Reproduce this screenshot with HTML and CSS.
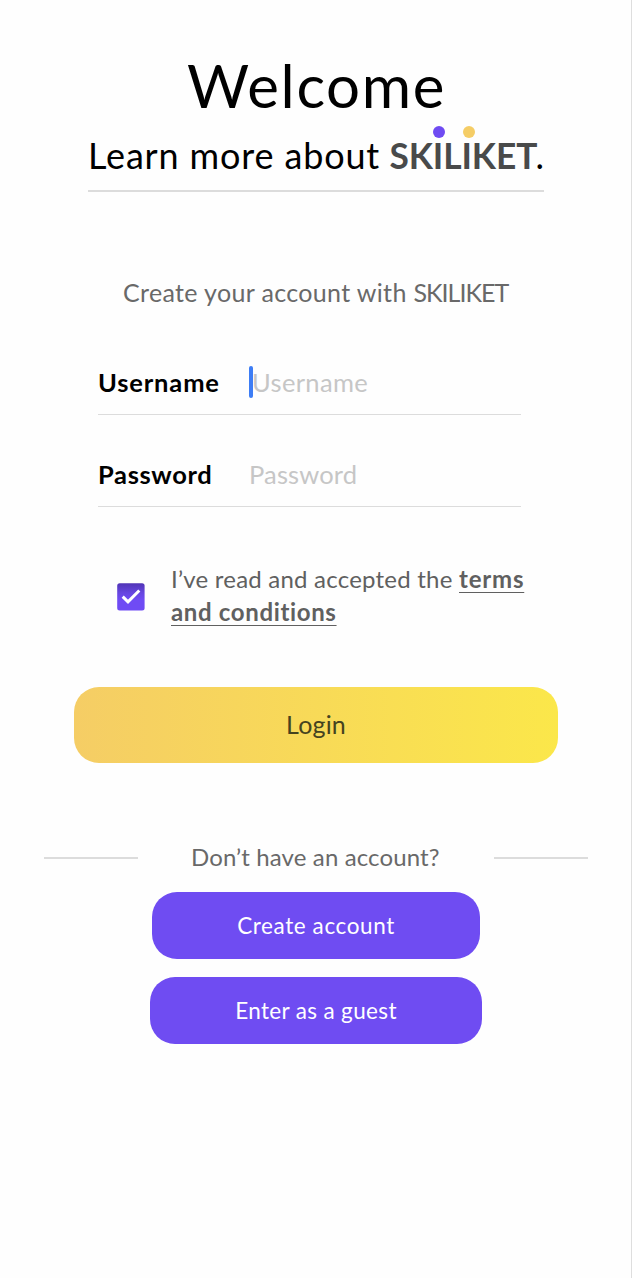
FILE: index.html
```html
<!DOCTYPE html>
<html lang="en">
<head>
<meta charset="utf-8">
<title>Skiliket login</title>
<link rel="stylesheet" href="styles.css">
</head>
<body>
<main class="screen">
  <header class="intro">
    <h1 class="title">Welcome</h1>
    <p class="tagline"><span class="lead">Learn more about</span><span class="brand">SK<span class="dotted violet">I</span>L<span class="dotted amber">I</span>KET</span><span class="stop">.</span></p>
  </header>
  <p class="prompt">Create your account with <span class="name">SKILIKET</span></p>
  <form class="form">
    <div class="field"><span class="label user">Username</span><span class="caret"></span><span class="hint hint-user">Username</span></div>
    <div class="field"><span class="label pass">Password</span><span class="hint hint-pass">Password</span></div>
  </form>
  <div class="consent">
    <svg class="check" viewBox="0 0 28 28">
      <defs><linearGradient id="shade" x1="0" y1="0" x2="0" y2="1"><stop offset="0" stop-color="#5034b5"/><stop offset=".35" stop-color="#6646e0"/><stop offset=".6" stop-color="#6f4bf4"/></linearGradient></defs>
      <rect x=".2" y=".2" width="27.4" height="27.4" rx="2.5" fill="url(#shade)"/>
      <path d="M5.7 13.6 11 18.8 22.3 7.5" fill="none" stroke="#fff" stroke-width="3"/>
    </svg>
    <p class="terms"><span class="read">I’ve read and accepted the</span><a class="link link-one">terms</a><br><a class="link link-two">and conditions</a></p>
  </div>
  <button class="login"><span>Login</span></button>
  <div class="divider"><span class="rule"></span><span class="question">Don’t have an account?</span><span class="rule"></span></div>
  <div class="actions">
    <button class="action create"><span>Create account</span></button>
    <button class="action guest"><span>Enter as a guest</span></button>
  </div>
</main>
</body>
</html>
```
FILE: styles.css
```css
* { box-sizing: border-box; }
body { margin: 0; background: #fefefe; font-family: Lato, "Open Sans", sans-serif; color: #000; }
h1, p { margin: 0; font-weight: 400; }
button { border: 0; padding: 0; font-family: inherit; }
.screen { width: 632px; height: 1278px; padding-top: 49px; border-right: 1px solid #dedede; display: flex; flex-direction: column; white-space: nowrap; }
.intro { width: 456px; height: 143px; margin-left: 88px; border-bottom: 2px solid #dcdcdc; }
.title { margin-left: 99px; font-size: 60px; line-height: 72px; letter-spacing: 1.6px; }
.tagline { display: flex; font-size: 36px; line-height: 69px; }
.lead { width: 303px; letter-spacing: .85px; }
.brand { width: 146px; font-weight: 700; font-size: 35.3px; color: #494a4a; letter-spacing: -.1px; }
.dotted { position: relative; }
.dotted::before { content: ""; position: absolute; left: 50%; top: -8px; width: 12px; height: 12px; margin-left: -5.5px; border-radius: 50%; }
.violet::before { background: #6f4bf2; }
.amber::before { background: #f5cd66; margin-left: -4px; }
.prompt { margin: 80px 0 0 123px; font-size: 25px; line-height: 40px; color: #696969; letter-spacing: .35px; }
.name { letter-spacing: -1px; }
.form { width: 423px; margin: 39px 0 0 98px; }
.field { display: flex; align-items: center; height: 64px; border-bottom: 1px solid #dcdcdc; font-size: 25.5px; line-height: 40px; padding-bottom: 1px; }
.field + .field { margin-top: 28px; }
.label { width: 151px; font-weight: 700; letter-spacing: .85px; }
.pass { letter-spacing: .65px; }
.caret { width: 4px; height: 32px; border-radius: 2px; background: #3d7df5; }
.hint { color: #c6c6c6; letter-spacing: .15px; }
.hint-user { margin-left: -1px; letter-spacing: .35px; }
.consent { display: flex; margin: 55px 0 0 117px; }
.check { width: 28px; height: 28px; margin-top: 21px; }
.terms { margin-left: 26px; color: #606060; font-size: 24px; line-height: 33px; }
.read { display: inline-block; width: 288px; letter-spacing: .22px; }
.link { font-weight: 700; text-decoration: underline; text-decoration-thickness: 1px; text-underline-offset: 4px; font-variant-ligatures: none; }
.link-one { letter-spacing: .8px; }
.link-two { letter-spacing: .65px; }
.login { width: 484px; height: 76px; margin: 59px 0 0 74px; padding-bottom: 2px; border-radius: 25px; background: linear-gradient(90deg, #f5cd65, #fbe74a); color: #45431f; font-size: 25px; letter-spacing: .2px; }
.divider { display: flex; align-items: center; margin: 74px 0 0 44px; height: 41px; width: 544px; }
.rule { width: 94px; height: 2px; background: #dcdcdc; }
.question { margin: 0 27px 0 53px; padding-bottom: 2px; flex: 1; color: #696969; font-size: 24px; letter-spacing: .12px; }
.actions { display: flex; flex-direction: column; gap: 18px; margin: 14px 0 0 150px; }
.action { height: 67px; border-radius: 25px; background: #6f4cf2; color: #fff; font-size: 22.5px; letter-spacing: .35px; }
.create { width: 328px; margin-left: 2px; letter-spacing: .6px; }
.guest { width: 332px; }
```
